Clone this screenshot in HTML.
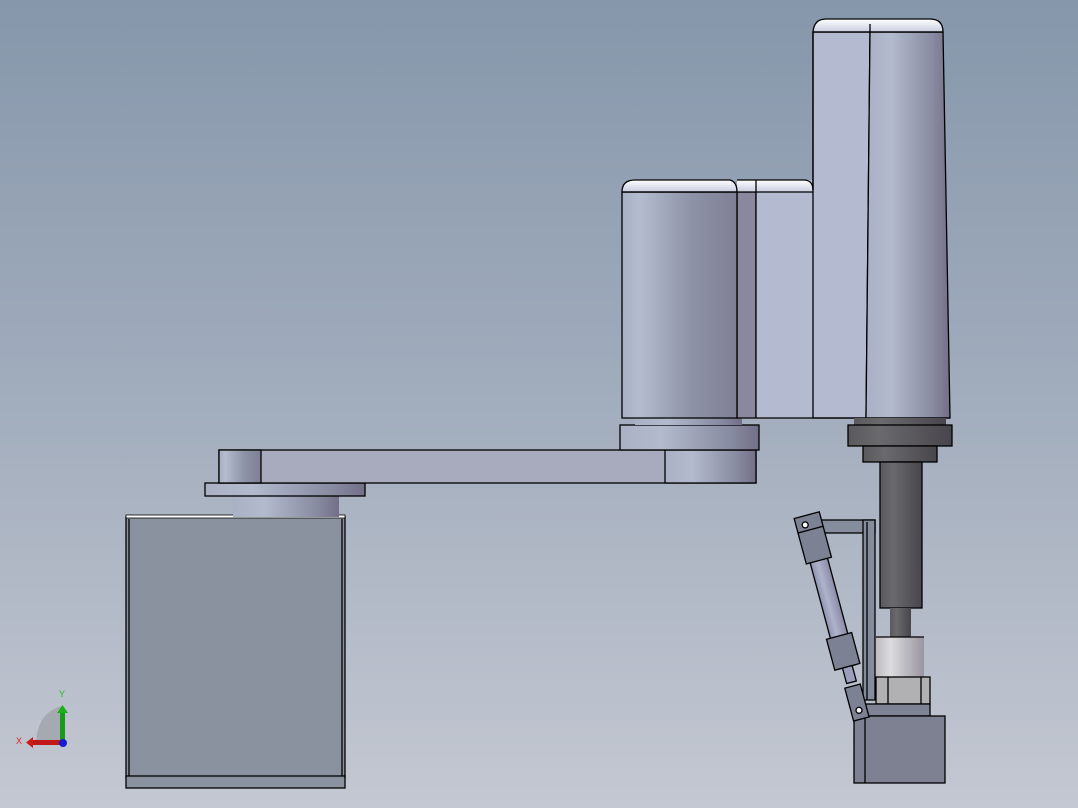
<!DOCTYPE html>
<html><head><meta charset="utf-8"><style>
html,body{margin:0;padding:0;width:1078px;height:808px;overflow:hidden}
svg{display:block}
</style></head><body>
<svg width="1078" height="808" viewBox="0 0 1078 808" xmlns="http://www.w3.org/2000/svg">
<defs>
<linearGradient id="bg" x1="0" y1="0" x2="0" y2="1">
<stop offset="0" stop-color="#8697ab"/><stop offset="0.5" stop-color="#a2adbd"/><stop offset="1" stop-color="#c4c8d2"/>
</linearGradient>
<linearGradient id="cyl" x1="0" y1="0" x2="1" y2="0">
<stop offset="0" stop-color="#a7afc2"/><stop offset="0.15" stop-color="#b4bccf"/><stop offset="0.6" stop-color="#8e93a6"/><stop offset="1" stop-color="#7f7f96"/>
</linearGradient>
<linearGradient id="cyl2" x1="0" y1="0" x2="1" y2="0">
<stop offset="0" stop-color="#aab1c4"/><stop offset="0.3" stop-color="#b3bacd"/><stop offset="0.8" stop-color="#878aa0"/><stop offset="1" stop-color="#736f88"/>
</linearGradient>
<linearGradient id="dark" x1="0" y1="0" x2="1" y2="0">
<stop offset="0" stop-color="#5a5a5e"/><stop offset="0.3" stop-color="#6a6a6d"/><stop offset="1" stop-color="#48454c"/>
</linearGradient>
<linearGradient id="silver" x1="0" y1="0" x2="1" y2="0">
<stop offset="0" stop-color="#bdbdc0"/><stop offset="0.3" stop-color="#dcdcde"/><stop offset="1" stop-color="#9a95a2"/>
</linearGradient>
<linearGradient id="rod" x1="0" y1="0" x2="1" y2="0">
<stop offset="0" stop-color="#8f93ad"/><stop offset="0.4" stop-color="#b0b3cc"/><stop offset="1" stop-color="#8a8aa6"/>
</linearGradient>
<linearGradient id="top" x1="0" y1="0" x2="0" y2="1">
<stop offset="0" stop-color="#ffffff"/><stop offset="1" stop-color="#c8cde0"/>
</linearGradient>
</defs>
<rect width="1078" height="808" fill="url(#bg)"/>
<g stroke="#000" stroke-width="1.3">
<rect x="126" y="517" width="219" height="261" fill="#8b929f"/>
<rect x="126" y="776" width="219" height="12" fill="#8b929f"/>
<line x1="129" y1="519" x2="129" y2="776"/>
<line x1="342" y1="519" x2="342" y2="776"/>
<rect x="126" y="515" width="219" height="3" fill="#fff" stroke-width="0.8"/>
<rect x="233" y="496" width="106" height="21" fill="url(#cyl2)" stroke="none"/>
<rect x="205" y="483" width="160" height="13" fill="url(#cyl2)"/>
<rect x="219" y="450" width="537" height="33" fill="#a7abbd"/>
<rect x="219" y="450" width="42" height="33" fill="url(#cyl)"/>
<rect x="665" y="450" width="91" height="33" fill="url(#cyl2)"/>
<rect x="620" y="425" width="139" height="25" fill="url(#cyl2)"/>
<rect x="635" y="418" width="107" height="7" fill="url(#cyl2)" stroke="none"/>
<path d="M737 192 H756 V418 H737 Z" fill="#8a889e"/>
<path d="M756 180 H813 V418 H756 Z" fill="#b4bbd0" stroke="none"/>
<path d="M737 180 H806 Q813 181 813 190 V192 H737 Z" fill="url(#top)" stroke="none"/>
<line x1="756" y1="180" x2="756" y2="418"/>
<path d="M622 192 V418 H737 V192 Z" fill="url(#cyl)"/>
<path d="M622 192 Q622 180 635 180 H730 Q737 182 737 192 Z" fill="url(#top)"/>
<line x1="622" y1="192" x2="813" y2="192"/>
<line x1="737" y1="180" x2="805" y2="180"/>
<path d="M813 32 H870 L866 418 H813 Z" fill="#b4bbd0"/>
<path d="M870 32 H943 L950 418 H866 Z" fill="url(#cyl2)"/>
<path d="M813 32 Q814 19 826 19 H930 Q943 19 943 32 Z" fill="url(#top)"/>
<line x1="813" y1="32" x2="943" y2="32"/>
<line x1="870" y1="24" x2="870" y2="32"/>
<path d="M805 180 Q813 181 813 190" fill="none"/>
<line x1="813" y1="32" x2="813" y2="190"/>
<line x1="756" y1="418" x2="950" y2="418"/>
<rect x="854" y="418" width="92" height="8" fill="url(#dark)" stroke="none"/>
<rect x="848" y="425" width="104" height="21" fill="url(#dark)"/>
<rect x="863" y="446" width="74" height="16" fill="url(#dark)"/>
<rect x="880" y="462" width="42" height="146" fill="url(#dark)"/>
<rect x="890" y="608" width="21" height="30" fill="url(#dark)" stroke="none"/>
<rect x="876" y="637" width="48" height="40" fill="url(#silver)" stroke="none"/>
<line x1="876" y1="637" x2="924" y2="637"/>
<rect x="876" y="677" width="54" height="27" fill="#b1b1b4"/>
<line x1="888" y1="677" x2="888" y2="704"/>
<line x1="921" y1="677" x2="921" y2="704"/>
<rect x="860" y="704" width="70" height="12" fill="#7e8495"/>
<rect x="854" y="716" width="91" height="67" fill="#7d8192"/>
<line x1="865" y1="716" x2="865" y2="783"/>
<rect x="815" y="520" width="60" height="13" fill="#858c9c"/>
<rect x="863" y="520" width="12" height="180" fill="#858c9c"/>
<line x1="867" y1="522" x2="867" y2="700"/>
<g transform="rotate(-15 808 520)">
<rect x="799" y="560" width="18" height="112" fill="url(#rod)"/>
<rect x="795" y="515" width="26" height="47" fill="#7c8194"/>
<line x1="795" y1="530" x2="821" y2="530"/>
<rect x="795" y="640" width="26" height="32" fill="#7c8194"/>
<circle cx="804" cy="524" r="3" fill="#fff"/>
<rect x="803" y="672" width="10" height="16" fill="#9c9fbb"/>
<rect x="800" y="692" width="16" height="34" fill="#7c8194"/>
<circle cx="808" cy="717" r="3" fill="#fff"/>
</g>
</g>
<path d="M36 742 Q38 712 62 706 V742 Z" fill="#9a9ea6" opacity="0.7"/>
<rect x="60" y="712" width="5" height="30" fill="#1a9a1a"/>
<path d="M57 713 L62.5 705 L68 713 Z" fill="#1ab01a"/>
<rect x="32" y="740" width="30" height="5" fill="#c01818"/>
<path d="M33 737 L26 742.5 L33 748 Z" fill="#d01a1a"/>
<circle cx="63" cy="743" r="4" fill="#1a1ad0"/>
<text x="59" y="697" font-family="Liberation Sans, sans-serif" font-size="9" fill="#20c020">Y</text>
<text x="16" y="744" font-family="Liberation Sans, sans-serif" font-size="9" fill="#e02020">X</text>
</svg>
</body></html>
